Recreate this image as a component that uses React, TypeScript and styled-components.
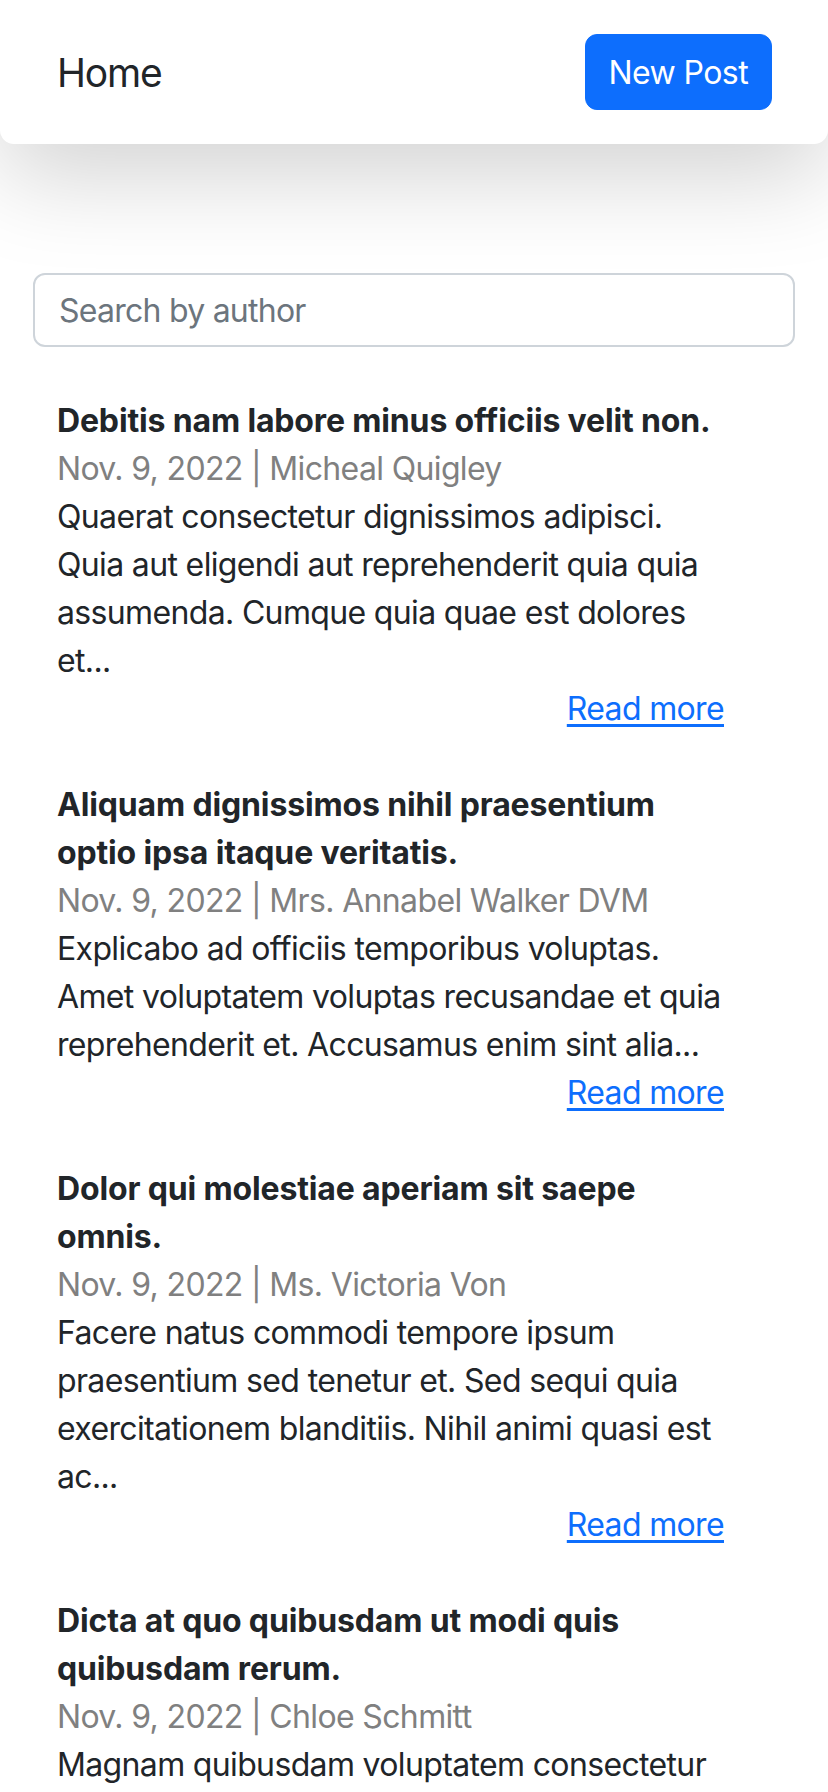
import React, { FunctionComponent, useState } from 'react';
import styled, { createGlobalStyle } from 'styled-components';

const GlobalStyle = createGlobalStyle`
  body {
    margin: 0;
    background: #fff;
    font-family: Inter, "Noto Sans", sans-serif;
    color: #212529;
  }
  * {
    box-sizing: border-box;
  }
`;

const Navbar = styled.nav`
  display: flex;
  align-items: center;
  justify-content: space-between;
  height: 144px;
  padding: 0 56px 0 57px;
  background: #fff;
  border-radius: 0 0 14px 14px;
  box-shadow: 0 32px 96px rgba(0, 0, 0, 0.175);
`;

const Brand = styled.a`
  font-size: 39px;
  color: #212529;
  text-decoration: none;
  letter-spacing: -1.2px;
`;

const PrimaryButton = styled.button`
  height: 76px;
  padding: 0 23px;
  border: 1px solid #0d6efd;
  border-radius: 12px;
  background: #0d6efd;
  color: #fff;
  font-family: inherit;
  font-size: 32px;
  letter-spacing: -0.6px;
  cursor: pointer;
`;

const Main = styled.main`
  padding: 129px 33px 0;
`;

const SearchInput = styled.input`
  display: block;
  width: 100%;
  height: 74px;
  padding: 0 24px;
  border: 2px solid #ced4da;
  border-radius: 12px;
  font-family: inherit;
  font-size: 32px;
  letter-spacing: -0.75px;
  color: #212529;
  outline: none;

  &::placeholder {
    color: #6c757d;
  }
`;

const PostList = styled.div`
  display: flex;
  flex-direction: column;
  gap: 48px;
  padding: 50px 71px 0 24px;
`;

const Post = styled.article`
  display: flex;
  flex-direction: column;
  font-size: 32px;
  line-height: 48px;
  letter-spacing: -0.65px;
`;

const Title = styled.h2`
  margin: 0;
  font-size: 32px;
  font-weight: 700;
  line-height: 48px;
  letter-spacing: -0.15px;
  color: #212529;
`;

const Meta = styled.div`
  color: #808080;
`;

const Excerpt = styled.p`
  margin: 0;
  color: #212529;
`;

const ReadMore = styled.a`
  align-self: flex-end;
  color: #0d6efd;
  text-decoration: underline;
  text-underline-offset: 4px;
`;

interface IPost {
  title: string;
  date: string;
  author: string;
  excerpt: string;
}

const posts: IPost[] = [
  {
    title: 'Debitis nam labore minus officiis velit non.',
    date: 'Nov. 9, 2022',
    author: 'Micheal Quigley',
    excerpt:
      'Quaerat consectetur dignissimos adipisci. Quia aut eligendi aut reprehenderit quia quia assumenda. Cumque quia quae est dolores et...',
  },
  {
    title: 'Aliquam dignissimos nihil praesentium optio ipsa itaque veritatis.',
    date: 'Nov. 9, 2022',
    author: 'Mrs. Annabel Walker DVM',
    excerpt:
      'Explicabo ad officiis temporibus voluptas. Amet voluptatem voluptas recusandae et quia reprehenderit et. Accusamus enim sint alia...',
  },
  {
    title: 'Dolor qui molestiae aperiam sit saepe omnis.',
    date: 'Nov. 9, 2022',
    author: 'Ms. Victoria Von',
    excerpt:
      'Facere natus commodi tempore ipsum praesentium sed tenetur et. Sed sequi quia exercitationem blanditiis. Nihil animi quasi est ac...',
  },
  {
    title: 'Dicta at quo quibusdam ut modi quis quibusdam rerum.',
    date: 'Nov. 9, 2022',
    author: 'Chloe Schmitt',
    excerpt:
      'Magnam quibusdam voluptatem consectetur adipisci sit amet. Dolorem ipsum quia dolor sit amet...',
  },
];

const PostItem: FunctionComponent<{ post: IPost }> = ({ post }) => (
  <Post>
    <Title>{post.title}</Title>
    <Meta>
      {post.date} | {post.author}
    </Meta>
    <Excerpt>{post.excerpt}</Excerpt>
    <ReadMore href="#">Read more</ReadMore>
  </Post>
);

const App: FunctionComponent = () => {
  const [query, setQuery] = useState('');

  const filtered = posts.filter((p) =>
    p.author.toLowerCase().includes(query.toLowerCase())
  );

  return (
    <>
      <GlobalStyle />
      <Navbar>
        <Brand href="#">Home</Brand>
        <PrimaryButton type="button">New Post</PrimaryButton>
      </Navbar>
      <Main>
        <SearchInput
          placeholder="Search by author"
          value={query}
          onChange={(e) => setQuery(e.target.value)}
        />
        <PostList>
          {filtered.map((post) => (
            <PostItem key={post.title} post={post} />
          ))}
        </PostList>
      </Main>
    </>
  );
};

export default App;
